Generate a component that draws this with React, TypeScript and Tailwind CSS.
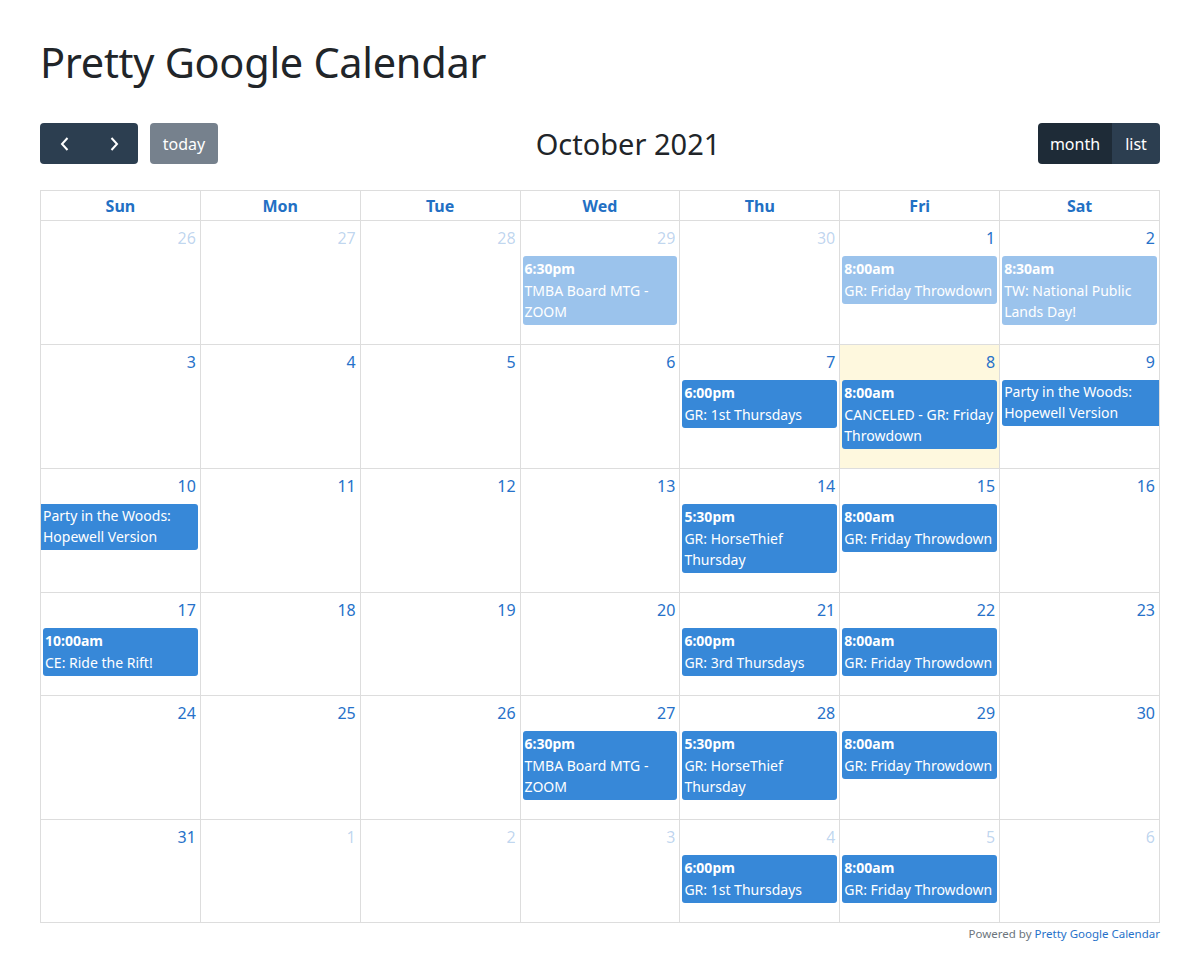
import React from "react"

type Ev = {
  time?: string
  title: string
  past?: boolean
  contLeft?: boolean // continues from previous week
  contRight?: boolean // continues into next week
}

type Day = {
  n: number
  other?: boolean
  today?: boolean
  events?: Ev[]
}

const weeks: { h: string; days: Day[] }[] = [
  {
    h: "h-[124px]",
    days: [
      { n: 26, other: true },
      { n: 27, other: true },
      { n: 28, other: true },
      { n: 29, other: true, events: [{ time: "6:30pm", title: "TMBA Board MTG - ZOOM", past: true }] },
      { n: 30, other: true },
      { n: 1, events: [{ time: "8:00am", title: "GR: Friday Throwdown", past: true }] },
      { n: 2, events: [{ time: "8:30am", title: "TW: National Public Lands Day!", past: true }] },
    ],
  },
  {
    h: "h-[124px]",
    days: [
      { n: 3 },
      { n: 4 },
      { n: 5 },
      { n: 6 },
      { n: 7, events: [{ time: "6:00pm", title: "GR: 1st Thursdays" }] },
      { n: 8, today: true, events: [{ time: "8:00am", title: "CANCELED - GR: Friday Throwdown" }] },
      { n: 9, events: [{ title: "Party in the Woods: Hopewell Version", contRight: true }] },
    ],
  },
  {
    h: "h-[124px]",
    days: [
      { n: 10, events: [{ title: "Party in the Woods: Hopewell Version", contLeft: true }] },
      { n: 11 },
      { n: 12 },
      { n: 13 },
      { n: 14, events: [{ time: "5:30pm", title: "GR: HorseThief Thursday" }] },
      { n: 15, events: [{ time: "8:00am", title: "GR: Friday Throwdown" }] },
      { n: 16 },
    ],
  },
  {
    h: "h-[103px]",
    days: [
      { n: 17, events: [{ time: "10:00am", title: "CE: Ride the Rift!" }] },
      { n: 18 },
      { n: 19 },
      { n: 20 },
      { n: 21, events: [{ time: "6:00pm", title: "GR: 3rd Thursdays" }] },
      { n: 22, events: [{ time: "8:00am", title: "GR: Friday Throwdown" }] },
      { n: 23 },
    ],
  },
  {
    h: "h-[124px]",
    days: [
      { n: 24 },
      { n: 25 },
      { n: 26 },
      { n: 27, events: [{ time: "6:30pm", title: "TMBA Board MTG - ZOOM" }] },
      { n: 28, events: [{ time: "5:30pm", title: "GR: HorseThief Thursday" }] },
      { n: 29, events: [{ time: "8:00am", title: "GR: Friday Throwdown" }] },
      { n: 30 },
    ],
  },
  {
    h: "h-[103px]",
    days: [
      { n: 31 },
      { n: 1, other: true },
      { n: 2, other: true },
      { n: 3, other: true },
      { n: 4, other: true, events: [{ time: "6:00pm", title: "GR: 1st Thursdays" }] },
      { n: 5, other: true, events: [{ time: "8:00am", title: "GR: Friday Throwdown" }] },
      { n: 6, other: true },
    ],
  },
]

const dayNames = ["Sun", "Mon", "Tue", "Wed", "Thu", "Fri", "Sat"]

function EventBlock({ ev }: { ev: Ev }) {
  return (
    <div
      className={[
        "px-[2px] pt-[1px] pb-[3px] text-[14px] leading-[21px] text-white mb-[2px]",
        ev.past ? "bg-[#9bc3ec]" : "bg-[#3788d8]",
        ev.contLeft ? "ml-0 rounded-r-[3px]" : "ml-[2px] rounded-l-[3px]",
        ev.contRight ? "mr-0" : "mr-[2px] rounded-r-[3px]",
      ].join(" ")}
    >
      {ev.time && <div className="font-bold leading-[23px]">{ev.time}</div>}
      <div>{ev.title}</div>
    </div>
  )
}

export default function App() {
  return (
    <div className="min-h-[962px] bg-white pl-[40px] pt-[35px] font-['Noto_Sans','Open_Sans',sans-serif] text-[#212529]">
      <div className="w-[1120px]">
        <h1 className="text-[41.5px] leading-[54px] font-normal tracking-[-0.3px]">Pretty Google Calendar</h1>

        {/* toolbar */}
        <div className="mt-[34px] mb-[26px] flex h-[41px] items-center justify-between">
          <div className="flex items-center gap-3">
            <div className="flex h-[41px] overflow-hidden rounded-[4px] bg-[#2c3e50]">
              <button className="flex w-[49px] items-center justify-center text-white">
                <svg width="16" height="18" viewBox="0 0 16 18" fill="none" stroke="currentColor" strokeWidth="2">
                  <path d="M10.5 3 5 9l5.5 6" />
                </svg>
              </button>
              <button className="flex w-[49px] items-center justify-center text-white">
                <svg width="16" height="18" viewBox="0 0 16 18" fill="none" stroke="currentColor" strokeWidth="2">
                  <path d="M5.5 3l5.5 6-5.5 6" />
                </svg>
              </button>
            </div>
            <button className="h-[41px] w-[68px] rounded-[4px] bg-[#76818d] text-[16px] text-white">today</button>
          </div>
          <h2 className="text-[29px] leading-[34px] font-normal">October 2021</h2>
          <div className="flex h-[41px] overflow-hidden rounded-[4px] text-[16px] text-white">
            <button className="w-[74px] bg-[#1e2b37]">month</button>
            <button className="w-[48px] bg-[#2c3e50]">list</button>
          </div>
        </div>

        {/* grid */}
        <div className="border-r border-b border-[#dddddd]">
          <div className="grid h-[30px] grid-cols-7">
            {dayNames.map((d) => (
              <div
                key={d}
                className="flex items-center justify-center border-t border-l border-[#dddddd] text-[16px] font-bold text-[#2270c4]"
              >
                {d}
              </div>
            ))}
          </div>
          {weeks.map((w, wi) => (
            <div key={wi} className={`grid grid-cols-7 ${w.h}`}>
              {w.days.map((d, di) => (
                <div
                  key={di}
                  className={`border-t border-l border-[#dddddd] ${d.today ? "bg-[#fef8de]" : ""}`}
                >
                  <div
                    className={`h-[35px] px-[4px] pt-[5px] text-right text-[16px] leading-[24px] ${
                      d.other ? "text-[#2671c9]/30" : "text-[#2671c9]"
                    }`}
                  >
                    {d.n}
                  </div>
                  {d.events?.map((ev, i) => <EventBlock key={i} ev={ev} />)}
                </div>
              ))}
            </div>
          ))}
        </div>

        <div className="mt-[2px] text-right text-[11.5px] text-[#6c757d]">
          Powered by <a className="text-[#2671c9]">Pretty Google Calendar</a>
        </div>
      </div>
    </div>
  )
}
